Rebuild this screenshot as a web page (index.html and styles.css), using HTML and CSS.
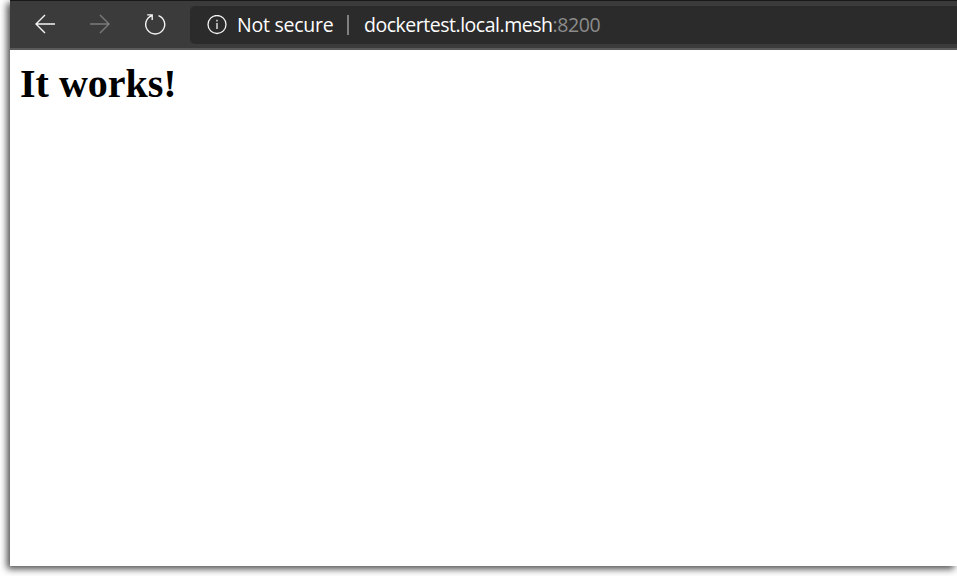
FILE: index.html
```html
<!DOCTYPE html>
<html lang="en">
<head>
<meta charset="utf-8">
<title>It works!</title>
<link rel="stylesheet" href="styles.css">
</head>
<body>
<div class="window">
  <header class="toolbar">
    <nav class="nav">
      <svg class="icon" width="24" height="24" viewBox="0 0 24 24"><path d="M22 12H3M12 3L3 12l9 9"/></svg>
      <svg class="icon disabled" width="24" height="24" viewBox="0 0 24 24"><path d="M2 12h19M12 3l9 9-9 9"/></svg>
      <svg class="icon" width="24" height="24" viewBox="0 0 24 24"><path d="M15.5 3.6A9.5 9.5 0 1 1 8.9 3.6M4.2 2.9h5v5"/></svg>
    </nav>
    <div class="address">
      <svg class="info" width="20" height="20" viewBox="0 0 20 20"><circle cx="10" cy="9.5" r="9"/><path d="M10 8v6M10 4.8v1.6"/></svg>
      <span class="status">Not secure</span>
      <span class="divider"></span>
      <span class="url">dockertest.local.mesh<span class="port">:8200</span></span>
    </div>
  </header>
  <main class="page"><h1>It works!</h1></main>
</div>
</body>
</html>
```
FILE: styles.css
```css
* { box-sizing: border-box; }
body {
  margin: 0;
  height: 576px;
  padding-left: 10px;
  overflow: hidden;
  background: #fff;
}
.window {
  width: 947px;
  height: 566px;
  background: #fff;
  box-shadow: -3px 3px 7px rgba(0, 0, 0, .7);
}
.toolbar {
  display: flex;
  height: 50px;
  padding-top: 5px;
  background: #3b3b3b;
  border-top: 1px solid #191919;
  border-bottom: 2px solid #5a5a5a;
}
.nav {
  display: flex;
  gap: 31px;
  width: 180px;
  padding: 6px 0 0 23px;
}
.icon, .info {
  flex: none;
  fill: none;
  stroke: #f4f4f4;
  stroke-width: 1.4;
}
.disabled { stroke: #7b7b7b; }
.address {
  display: flex;
  align-items: center;
  flex: 1;
  height: 38px;
  padding-left: 17px;
  border-radius: 5px 0 0 5px;
  background: #2b2b2b;
  color: #fff;
  font: 19.5px/38px "Open Sans", "Noto Sans", sans-serif;
  white-space: nowrap;
}
.info { stroke-width: 1.3; }
.status {
  width: 98px;
  margin-left: 10px;
  letter-spacing: -.25px;
}
.divider {
  width: 2px;
  height: 20px;
  margin: 0 15px 0 12px;
  background: #808080;
}
.url { letter-spacing: -.48px; }
.port {
  color: #8c8c8c;
  letter-spacing: -.4px;
}
.page { padding: 11px 10px; }
h1 {
  margin: 0;
  color: #000;
  font: bold 40px/46px "Liberation Serif", serif;
}
```
